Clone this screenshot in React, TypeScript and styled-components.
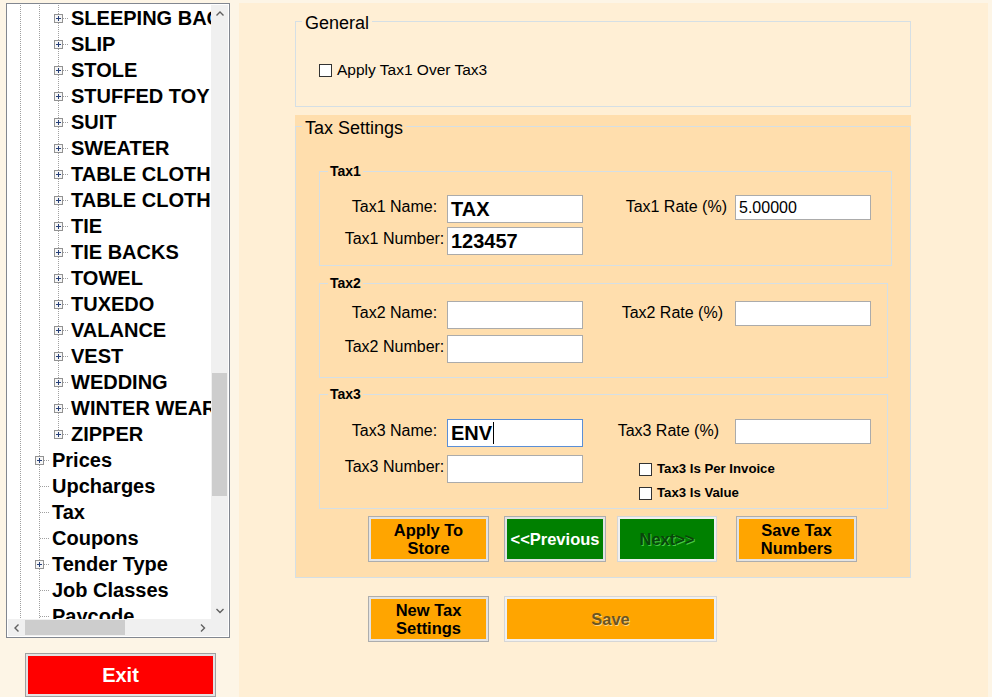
import styled, { createGlobalStyle } from "styled-components";

const GlobalStyle = createGlobalStyle`
  html, body {
    margin: 0;
    padding: 0;
    background: #fdf5e6;
  }
  body {
    font-family: "Liberation Sans", Arial, sans-serif;
  }
`;

type TreeItem = { label: string; level: number; expandable?: boolean; last?: boolean };

const ITEMS: TreeItem[] = [
  { label: "SLEEPING BAG", level: 2, expandable: true },
  { label: "SLIP", level: 2, expandable: true },
  { label: "STOLE", level: 2, expandable: true },
  { label: "STUFFED TOY", level: 2, expandable: true },
  { label: "SUIT", level: 2, expandable: true },
  { label: "SWEATER", level: 2, expandable: true },
  { label: "TABLE CLOTH", level: 2, expandable: true },
  { label: "TABLE CLOTH", level: 2, expandable: true },
  { label: "TIE", level: 2, expandable: true },
  { label: "TIE BACKS", level: 2, expandable: true },
  { label: "TOWEL", level: 2, expandable: true },
  { label: "TUXEDO", level: 2, expandable: true },
  { label: "VALANCE", level: 2, expandable: true },
  { label: "VEST", level: 2, expandable: true },
  { label: "WEDDING", level: 2, expandable: true },
  { label: "WINTER WEAR", level: 2, expandable: true },
  { label: "ZIPPER", level: 2, expandable: true, last: true },
  { label: "Prices", level: 1, expandable: true },
  { label: "Upcharges", level: 1 },
  { label: "Tax", level: 1 },
  { label: "Coupons", level: 1 },
  { label: "Tender Type", level: 1, expandable: true },
  { label: "Job Classes", level: 1 },
  { label: "Paycode", level: 1 },
];

const DOT = "#a0a0a0";

const Guide = () => (
  <Lines width={19} height={26} viewBox="0 0 19 26">
    <line x1={9.5} y1={0} x2={9.5} y2={26} stroke={DOT} strokeDasharray="1 1" />
  </Lines>
);

const Connector = ({ expandable, last }: { expandable?: boolean; last?: boolean }) => (
  <Lines width={19} height={26} viewBox="0 0 19 26">
    <line x1={9.5} y1={0} x2={9.5} y2={last ? 13 : 26} stroke={DOT} strokeDasharray="1 1" />
    <line x1={expandable ? 14 : 10} y1={13.5} x2={19} y2={13.5} stroke={DOT} strokeDasharray="1 1" />
    {expandable && (
      <g>
        <rect x={5.5} y={9.5} width={8} height={8} fill="#f6f6f6" stroke="#929292" />
        <path d="M7 13.5h5M9.5 11v5" stroke="#263f78" />
      </g>
    )}
  </Lines>
);

const Chevron = ({ dir }: { dir: "up" | "down" | "left" | "right" }) => {
  const pts = {
    up: "0.5,4.5 4,1 7.5,4.5",
    down: "0.5,1 4,4.5 7.5,1",
    left: "4.5,0.5 1,4 4.5,7.5",
    right: "1,0.5 4.5,4 1,7.5",
  }[dir];
  const w = dir === "up" || dir === "down" ? 8 : 6;
  const h = dir === "up" || dir === "down" ? 6 : 8;
  return (
    <svg width={w} height={h} viewBox={`0 0 ${w} ${h}`}>
      <polyline points={pts} fill="none" stroke="#606060" strokeWidth={1.4} />
    </svg>
  );
};

const App = () => {
  return (
    <>
      <GlobalStyle />
      <Page>
        <Sidebar>
          <TreeBox>
            <TreeList>
              {ITEMS.map((item, i) => (
                <TreeRow key={i}>
                  {Array.from({ length: item.level }).map((_, k) => (
                    <Guide key={k} />
                  ))}
                  <Connector expandable={item.expandable} last={item.last} />
                  <TreeLabel>{item.label}</TreeLabel>
                </TreeRow>
              ))}
            </TreeList>
            <VScroll>
              <ScrollButton>
                <Chevron dir="up" />
              </ScrollButton>
              <VTrack>
                <VThumb />
              </VTrack>
              <ScrollButton>
                <Chevron dir="down" />
              </ScrollButton>
            </VScroll>
            <HScroll>
              <ScrollButton>
                <Chevron dir="left" />
              </ScrollButton>
              <HTrack>
                <HThumb />
              </HTrack>
              <ScrollButton>
                <Chevron dir="right" />
              </ScrollButton>
            </HScroll>
            <Corner />
          </TreeBox>
          <ExitButton>Exit</ExitButton>
        </Sidebar>

        <Main>
          <GroupBox $w={616} $pt={29} $pb={28}>
            <GroupTitle>General</GroupTitle>
            <CheckRow $ml={17}>
              <CheckBox />
              <CheckText>Apply Tax1 Over Tax3</CheckText>
            </CheckRow>
          </GroupBox>

          <TaxPanel>
            <GroupBox $w={616} $pt={0} $pb={15}>
              <GroupTitle>Tax Settings</GroupTitle>

              <TaxBox $w={573} $mt={25} $pt={16} $pb={10}>
                <TaxTitle>Tax1</TaxTitle>
                <FieldGrid $gap={4}>
                  <FieldLabel>Tax1 Name:</FieldLabel>
                  <TextBox $h={28} $bold>TAX</TextBox>
                  <RateLabel $pr={8}>Tax1 Rate (%)</RateLabel>
                  <TextBox $h={25}>5.00000</TextBox>
                  <FieldLabel>Tax1 Number:</FieldLabel>
                  <TextBox $h={28} $bold>123457</TextBox>
                </FieldGrid>
              </TaxBox>

              <TaxBox $w={569} $mt={9} $pt={10} $pb={14}>
                <TaxTitle>Tax2</TaxTitle>
                <FieldGrid $gap={6}>
                  <FieldLabel>Tax2 Name:</FieldLabel>
                  <TextBox $h={28} $bold />
                  <RateLabel $pr={12}>Tax2 Rate (%)</RateLabel>
                  <TextBox $h={25} />
                  <FieldLabel>Tax2 Number:</FieldLabel>
                  <TextBox $h={28} $bold />
                </FieldGrid>
              </TaxBox>

              <TaxBox $w={569} $mt={8} $pt={17} $pb={7}>
                <TaxTitle>Tax3</TaxTitle>
                <FieldGrid $gap={8}>
                  <FieldLabel>Tax3 Name:</FieldLabel>
                  <TextBox $h={28} $bold $focused>
                    ENV
                    <Caret />
                  </TextBox>
                  <RateLabel $pr={16}>Tax3 Rate (%)</RateLabel>
                  <TextBox $h={25} />
                  <FieldLabel>Tax3 Number:</FieldLabel>
                  <TextBox $h={28} $bold />
                  <CheckList>
                    <CheckRow $ml={0}>
                      <CheckBox />
                      <SmallCheckText>Tax3 Is Per Invoice</SmallCheckText>
                    </CheckRow>
                    <CheckRow $ml={0}>
                      <CheckBox />
                      <SmallCheckText>Tax3 Is Value</SmallCheckText>
                    </CheckRow>
                  </CheckList>
                </FieldGrid>
              </TaxBox>

              <ButtonRow $mt={7} $ml={66}>
                <ActionButton $tone="orange" $w={121}>
                  Apply To
                  <br />
                  Store
                </ActionButton>
                <ActionButton $tone="green" $w={102} $ml={15}>
                  &lt;&lt;Previous
                </ActionButton>
                <ActionButton $tone="green" $w={100} $ml={11} $disabled>
                  Next&gt;&gt;
                </ActionButton>
                <ActionButton $tone="orange" $w={121} $ml={19}>
                  Save Tax
                  <br />
                  Numbers
                </ActionButton>
              </ButtonRow>
            </GroupBox>
          </TaxPanel>

          <ButtonRow $mt={18} $ml={73}>
            <ActionButton $tone="orange" $w={121}>
              New Tax
              <br />
              Settings
            </ActionButton>
            <ActionButton $tone="orange" $w={213} $ml={15} $disabled>
              Save
            </ActionButton>
          </ButtonRow>
        </Main>
      </Page>
    </>
  );
};

const Page = styled.div`
  display: flex;
  width: 992px;
  height: 697px;
  overflow: hidden;
  background: #fdf5e6;
  color: #000;
  font-family: "Liberation Sans", Arial, sans-serif;
`;

const Sidebar = styled.aside`
  flex: none;
  width: 239px;
  display: flex;
  flex-direction: column;
  padding: 3px 0 0 6px;
  box-sizing: border-box;
`;

const TreeBox = styled.div`
  width: 224px;
  height: 635px;
  box-sizing: border-box;
  border: 1px solid #828790;
  padding: 1px;
  background: #fff;
  display: grid;
  grid-template-columns: 1fr 17px;
  grid-template-rows: 1fr 17px;
`;

const TreeList = styled.ul`
  margin: 0;
  padding: 0 0 0 3px;
  list-style: none;
  overflow: hidden;
`;

const TreeRow = styled.li`
  display: flex;
  align-items: center;
  height: 26px;
  white-space: nowrap;
`;

const Lines = styled.svg`
  flex: none;
  display: block;
`;

const TreeLabel = styled.span`
  margin-left: 3px;
  font-weight: bold;
  font-size: 20px;
  line-height: 26px;
`;

const VScroll = styled.div`
  display: flex;
  flex-direction: column;
  background: #f0f0f0;
`;

const HScroll = styled.div`
  display: flex;
  background: #f0f0f0;
`;

const ScrollButton = styled.div`
  flex: none;
  width: 17px;
  height: 17px;
  display: flex;
  align-items: center;
  justify-content: center;
`;

const VTrack = styled.div`
  flex: 1;
`;

const VThumb = styled.div`
  margin: 351px 1px 0;
  height: 123px;
  background: #cdcdcd;
`;

const HTrack = styled.div`
  flex: 1;
  padding: 1px 0;
`;

const HThumb = styled.div`
  width: 100px;
  height: 15px;
  background: #cdcdcd;
`;

const Corner = styled.div`
  background: #f0f0f0;
`;

const ExitButton = styled.button`
  margin: 15px 0 0 19px;
  width: 191px;
  height: 44px;
  padding: 0;
  border: 1px solid #a0a0a0;
  box-shadow: inset 0 0 0 2px #e3e3e3;
  background: #ff0000;
  color: #fff;
  font-family: "Liberation Sans", Arial, sans-serif;
  font-weight: bold;
  font-size: 20px;
`;

const Main = styled.main`
  flex: none;
  width: 749px;
  height: 694px;
  margin-top: 3px;
  padding: 7px 0 0 56px;
  box-sizing: border-box;
  background: #ffefd5;
`;

const GroupBox = styled.fieldset<{ $w: number; $pt: number; $pb: number }>`
  width: ${({ $w }) => $w}px;
  min-width: 0;
  box-sizing: border-box;
  margin: 0;
  padding: ${({ $pt, $pb }) => `${$pt}px 0 ${$pb}px 6px`};
  border: 1px solid #d5dfe5;
`;

const GroupTitle = styled.legend`
  padding: 3px 3px 0;
  font-size: 18px;
  line-height: 20px;
`;

const TaxPanel = styled.div`
  width: 616px;
  height: 463px;
  margin-top: 8px;
  box-sizing: border-box;
  background: #ffdead;
`;

const TaxBox = styled.fieldset<{ $w: number; $mt: number; $pt: number; $pb: number }>`
  width: ${({ $w }) => $w}px;
  min-width: 0;
  box-sizing: border-box;
  margin: ${({ $mt }) => $mt}px 0 0 17px;
  padding: ${({ $pt, $pb }) => `${$pt}px 0 ${$pb}px 8px`};
  border: 1px solid #d5dfe5;
`;

const TaxTitle = styled.legend`
  padding: 0 2px;
  font-weight: bold;
  font-size: 14px;
  line-height: 16px;
`;

const FieldGrid = styled.div<{ $gap: number }>`
  display: grid;
  grid-template-columns: 105px 136px 152px 136px;
  row-gap: ${({ $gap }) => $gap}px;
  align-items: start;
  margin-left: 14px;
`;

const FieldLabel = styled.span`
  margin-top: 3px;
  font-size: 16px;
  line-height: 18px;
  text-align: center;
  white-space: nowrap;
`;

const RateLabel = styled(FieldLabel)<{ $pr: number }>`
  justify-self: end;
  padding-right: ${({ $pr }) => $pr}px;
`;

const TextBox = styled.div<{ $h: number; $bold?: boolean; $focused?: boolean }>`
  width: 136px;
  height: ${({ $h }) => $h}px;
  box-sizing: border-box;
  display: flex;
  align-items: center;
  padding: 0 3px;
  background: #fff;
  border: 1px solid ${({ $focused }) => ($focused ? "#5b8fd6" : "#ababab")};
  font-size: ${({ $bold }) => ($bold ? 20 : 16)}px;
  font-weight: ${({ $bold }) => ($bold ? "bold" : "normal")};
  white-space: nowrap;
`;

const Caret = styled.span`
  width: 1px;
  height: 22px;
  margin-left: 1px;
  background: #000;
`;

const CheckList = styled.div`
  grid-column: 3 / span 2;
  display: flex;
  flex-direction: column;
  gap: 8px;
  margin: 6px 0 0 56px;
`;

const CheckRow = styled.label<{ $ml: number }>`
  display: flex;
  align-items: center;
  height: 16px;
  margin-left: ${({ $ml }) => $ml}px;
`;

const CheckBox = styled.span`
  width: 13px;
  height: 13px;
  box-sizing: border-box;
  border: 1px solid #333;
  background: #fff;
  flex: none;
`;

const CheckText = styled.span`
  margin-left: 5px;
  font-size: 15.5px;
  line-height: 18px;
`;

const SmallCheckText = styled.span`
  margin-left: 5px;
  font-weight: bold;
  font-size: 13.2px;
  line-height: 16px;
`;

const ButtonRow = styled.div<{ $mt: number; $ml: number }>`
  display: flex;
  margin: ${({ $mt, $ml }) => `${$mt}px 0 0 ${$ml}px`};
`;

const TONES = {
  orange: { bg: "#ffa500", fg: "#000", off: "#6b5520", glow: "#ffd58a" },
  green: { bg: "#008000", fg: "#fff", off: "#0a450a", glow: "#45c845" },
  red: { bg: "#ff0000", fg: "#fff", off: "#800000", glow: "#ff8080" },
};

const ActionButton = styled.button<{
  $tone: keyof typeof TONES;
  $w: number;
  $ml?: number;
  $disabled?: boolean;
}>`
  flex: none;
  width: ${({ $w }) => $w}px;
  height: 46px;
  margin-left: ${({ $ml }) => $ml ?? 0}px;
  padding: 0;
  background: ${({ $tone }) => TONES[$tone].bg};
  border: 1px solid ${({ $disabled }) => ($disabled ? "#d6d6d6" : "#adadad")};
  box-shadow: inset 0 0 0 2px ${({ $disabled }) => ($disabled ? "#f0f0f0" : "#e3e3e3")};
  color: ${({ $tone, $disabled }) => ($disabled ? TONES[$tone].off : TONES[$tone].fg)};
  text-shadow: ${({ $tone, $disabled }) => ($disabled ? `1px 1px 0 ${TONES[$tone].glow}` : "none")};
  font-family: "Liberation Sans", Arial, sans-serif;
  font-weight: bold;
  font-size: 16.5px;
  line-height: 18px;
`;

export default App;
